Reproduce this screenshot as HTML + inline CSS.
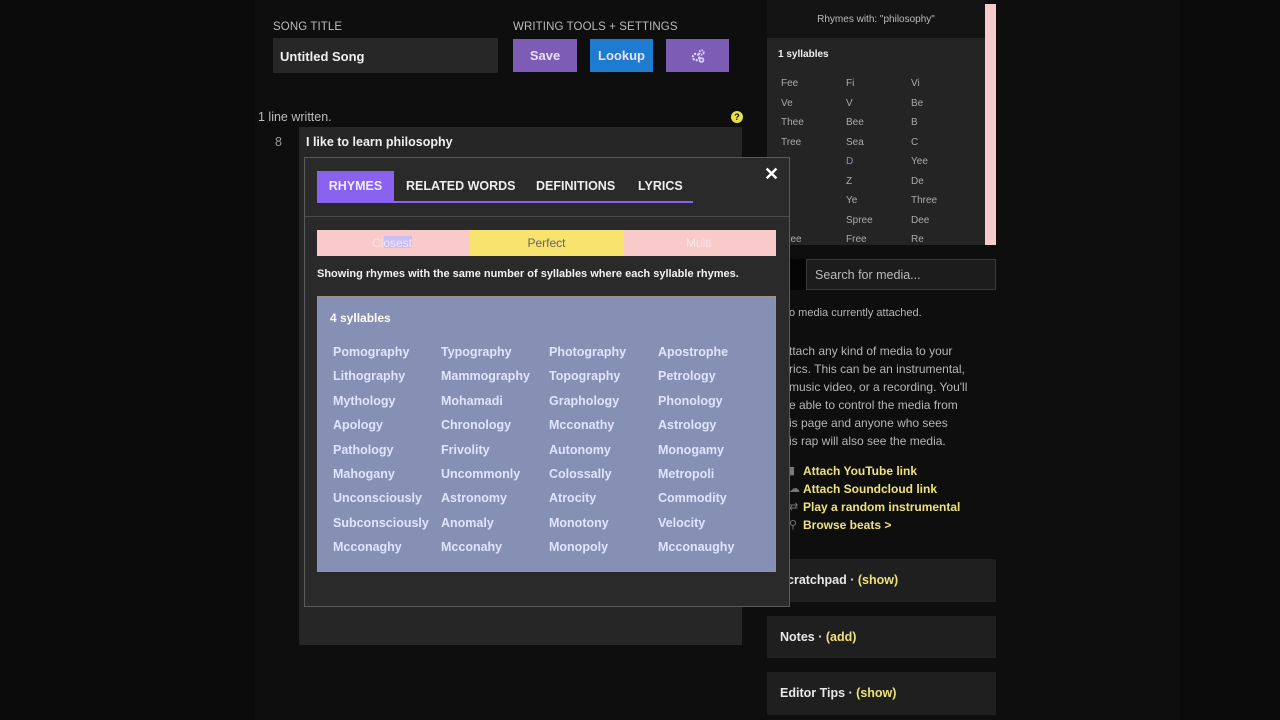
<!DOCTYPE html>
<html><head><meta charset="utf-8"><style>
*{margin:0;padding:0;box-sizing:border-box}
body{width:1280px;height:720px;background:#0b0b0b;font-family:"Liberation Sans",sans-serif;position:relative;overflow:hidden;color:#ddd}
.a{position:absolute}
.lbl{font-size:11.5px;color:#bbb;letter-spacing:.1px}
.btn{position:absolute;top:39px;height:33px;color:#e8e0ff;font-size:13px;font-weight:bold;text-align:center;line-height:33px}
.rw{font-size:10px;color:#aaa}
.w{position:absolute;font-size:12.5px;color:#dfe4ff;font-weight:bold}
.panel{position:absolute;left:767px;width:229px;background:#1f1f1f;font-size:12.5px;font-weight:bold;color:#e8e8e8;padding-left:13px}
.y{color:#efe27a}
.mt{position:absolute;left:789px;font-size:12px;color:#b5b5b5}
.mt.y{color:#efe27a}
</style></head><body>
<div class="a" style="left:255px;top:0;width:925px;height:720px;background:#0e0e0e"></div>
<div class="a lbl" style="left:273px;top:21px">SONG TITLE</div>
<div class="a" style="left:273px;top:38px;width:225px;height:35px;background:#272727;color:#f0f0f0;font-size:13px;font-weight:bold;padding:11px 0 0 7px">Untitled Song</div>
<div class="a lbl" style="left:513px;top:21px">WRITING TOOLS + SETTINGS</div>
<div class="btn" style="left:513px;width:64px;background:#7c5cb5">Save</div>
<div class="btn" style="left:590px;width:63px;background:#1d7bd0">Lookup</div>
<div class="btn" style="left:666px;width:63px;background:#7c5cb5"><svg width="16" height="16" viewBox="0 0 16 16" style="margin-top:9px"><circle cx="6" cy="9" r="3.2" fill="none" stroke="#e0d8ff" stroke-width="2.2" stroke-dasharray="2 1.2"/><circle cx="11.5" cy="4.5" r="2.2" fill="none" stroke="#e0d8ff" stroke-width="1.8" stroke-dasharray="1.5 1"/><circle cx="11.5" cy="12" r="2" fill="none" stroke="#e0d8ff" stroke-width="1.6"/></svg></div>

<div class="a" style="left:258px;top:110px;font-size:12.5px;color:#bbb">1 line written.</div>
<div class="a" style="left:731px;top:111px;width:12px;height:12px;border-radius:50%;background:#e6e04a;color:#111;font-size:9px;font-weight:bold;text-align:center;line-height:12px">?</div>
<div class="a" style="left:275px;top:135px;font-size:12.5px;color:#999">8</div>
<div class="a" style="left:299px;top:127px;width:443px;height:518px;background:#262626"></div>
<div class="a" style="left:306px;top:135px;font-size:12.5px;color:#f0f0f0;font-weight:bold">I like to learn philosophy</div>

<div class="a" style="left:767px;top:0;width:218px;height:245px;background:#141414"></div>
<div class="a rw" style="left:767px;top:14px;width:218px;text-align:center;color:#bbb">Rhymes with: "philosophy"</div>
<div class="a" style="left:767px;top:38px;width:218px;height:207px;background:#242424"></div>
<div class="a" style="left:985px;top:4px;width:11px;height:241px;background:#f6cbcb"></div>
<div class="a" style="left:778px;top:49px;font-size:10px;font-weight:bold;color:#eee">1 syllables</div>
<div class="a rw" style="left:781px;top:74px;line-height:19.5px">Fee<br>Ve<br>Thee<br>Tree<br><br><br><br><br>Free</div>
<div class="a rw" style="left:846px;top:74px;line-height:19.5px">Fi<br>V<br>Bee<br>Sea<br><span style="color:#8c8ccc">D</span><br>Z<br>Ye<br>Spree<br>Free</div>
<div class="a rw" style="left:911px;top:74px;line-height:19.5px">Vi<br>Be<br>B<br>C<br>Yee<br>De<br>Three<br>Dee<br>Re</div>

<div class="a" style="left:778px;top:259px;width:28px;height:31px;background:#050505"></div>
<div class="a" style="left:806px;top:259px;width:190px;height:31px;background:#1c1c1c;border:1px solid #3a3a3a;color:#bbb;font-size:12.5px;padding:8px 0 0 8px">Search for media...</div>
<div class="mt" style="top:307px;font-size:11px">o media currently attached.</div>
<div class="mt" style="top:342px;line-height:18px;font-size:12px">ttach any kind of media to your<br>rics. This can be an instrumental,<br>music video, or a recording. You'll<br>e able to control the media from<br>is page and anyone who sees<br>is rap will also see the media.</div>
<div class="mt" style="top:462px;line-height:18px;color:#777;font-size:11px">▮<br>☁<br>⇄<br>⚲</div>
<div class="mt y" style="left:803px;top:462px;line-height:18px;font-weight:bold">Attach YouTube link<br>Attach Soundcloud link<br>Play a random instrumental<br>Browse beats &gt;</div>
<div class="panel" style="top:559px;height:43px;line-height:43px;padding-left:20px">cratchpad · <span class="y">(show)</span></div>
<div class="panel" style="top:616px;height:42px;line-height:42px">Notes · <span class="y">(add)</span></div>
<div class="panel" style="top:672px;height:43px;line-height:43px">Editor Tips · <span class="y">(show)</span></div>

<div class="a" style="left:304px;top:157px;width:486px;height:450px;background:#2a2a2a;border:1px solid #5a5a5a"></div>
<div class="a" style="left:317px;top:171px;width:77px;height:32px;background:#8a62f0;color:#f0eaff;font-size:12.5px;font-weight:bold;text-align:center;line-height:31px">RHYMES</div>
<div class="a" style="left:317px;top:201px;width:376px;height:2px;background:#8a62f0"></div>
<div class="a" style="left:406px;top:179px;font-size:12.5px;font-weight:bold;color:#eee">RELATED WORDS</div>
<div class="a" style="left:536px;top:179px;font-size:12.5px;font-weight:bold;color:#eee">DEFINITIONS</div>
<div class="a" style="left:638px;top:179px;font-size:12.5px;font-weight:bold;color:#eee">LYRICS</div>
<div class="a" style="left:764px;top:164px;font-size:18px;font-weight:bold;color:#fff">✕</div>
<div class="a" style="left:305px;top:216px;width:484px;height:1px;background:#4a4a4a"></div>
<div class="a" style="left:317px;top:230px;width:459px;height:26px;background:#f8caca"></div>
<div class="a" style="left:469px;top:230px;width:155px;height:26px;background:#f8e36e;color:#666;font-size:12px;text-align:center;line-height:26px">Perfect</div>
<div class="a" style="left:384px;top:236px;width:28px;height:12px;background:#c9bdf5"></div>
<div class="a" style="left:372px;top:236px;font-size:12px;color:#f4e8ec">Closest</div>
<div class="a" style="left:686px;top:236px;font-size:12px;color:#f4e8ec">Multi</div>
<div class="a" style="left:317px;top:268px;font-size:11px;color:#f2f2f2;font-weight:bold">Showing rhymes with the same number of syllables where each syllable rhymes.</div>
<div class="a" style="left:317px;top:296px;width:459px;height:276px;background:#8690b4;border:1px solid #a48e88"></div>
<div class="a" style="left:330px;top:311px;font-size:12px;font-weight:bold;color:#fff">4 syllables</div>
<div class="w" style="left:333px;top:340px;line-height:24.4px">Pomography<br>Lithography<br>Mythology<br>Apology<br>Pathology<br>Mahogany<br>Unconsciously<br>Subconsciously<br>Mcconaghy</div>
<div class="w" style="left:441px;top:340px;line-height:24.4px">Typography<br>Mammography<br>Mohamadi<br>Chronology<br>Frivolity<br>Uncommonly<br>Astronomy<br>Anomaly<br>Mcconahy</div>
<div class="w" style="left:549px;top:340px;line-height:24.4px">Photography<br>Topography<br>Graphology<br>Mcconathy<br>Autonomy<br>Colossally<br>Atrocity<br>Monotony<br>Monopoly</div>
<div class="w" style="left:658px;top:340px;line-height:24.4px">Apostrophe<br>Petrology<br>Phonology<br>Astrology<br>Monogamy<br>Metropoli<br>Commodity<br>Velocity<br>Mcconaughy</div>
</body></html>
